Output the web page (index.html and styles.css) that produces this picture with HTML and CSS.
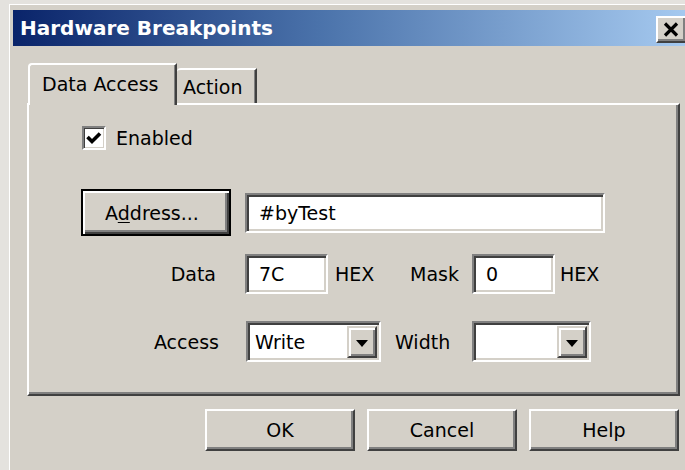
FILE: index.html
```html
<!DOCTYPE html>
<html lang="en">
<head>
<meta charset="utf-8">
<title>Hardware Breakpoints</title>
<link rel="stylesheet" href="styles.css">
</head>
<body>
<div class="window">
  <div class="titlebar">
    <span class="title">Hardware Breakpoints</span>
    <button class="close" type="button" aria-label="Close">
      <svg width="16" height="15" viewBox="0 0 16 15"><path d="M2 1.5 L14 13.5 M14 1.5 L2 13.5" stroke="#000" stroke-width="3.2" fill="none"/></svg>
    </button>
  </div>
  <div class="client">
    <div class="tabs">
      <div class="tab active">Data Access</div>
      <div class="tab">Action</div>
    </div>
    <div class="panel">
      <div class="check-row">
        <span class="checkbox">
          <svg width="20" height="20" viewBox="0 0 20 20"><path d="M3.5 9 L8 13.5 L16 5.5" stroke="#000" stroke-width="3.6" fill="none"/></svg>
        </span>
        <span>Enabled</span>
      </div>
      <div class="row addr-row">
        <button class="btn default" type="button">A<u>d</u>dress...</button>
        <div class="edit addr">#byTest</div>
      </div>
      <div class="row data-row">
        <span class="lbl lbl-data">Data</span>
        <div class="edit small">7C</div>
        <span class="unit">HEX</span>
        <span class="lbl lbl-mask">Mask</span>
        <div class="edit small mask">0</div>
        <span class="unit unit-last">HEX</span>
      </div>
      <div class="row access-row">
        <span class="lbl lbl-access">Access</span>
        <div class="combo access">
          <span class="combo-text">Write</span>
          <span class="drop"><svg width="12" height="7" viewBox="0 0 12 7"><path d="M0 0 H12 L6 7 Z" fill="#000"/></svg></span>
        </div>
        <span class="lbl lbl-width">Width</span>
        <div class="combo width">
          <span class="combo-text"></span>
          <span class="drop"><svg width="12" height="7" viewBox="0 0 12 7"><path d="M0 0 H12 L6 7 Z" fill="#000"/></svg></span>
        </div>
      </div>
    </div>
    <div class="actions">
      <button class="btn" type="button">OK</button>
      <button class="btn" type="button">Cancel</button>
      <button class="btn" type="button">Help</button>
    </div>
  </div>
</div>
</body>
</html>
```

FILE: styles.css
```css
html, body {
  margin: 0;
  padding: 0;
  overflow: hidden;
}

body {
  width: 685px;
  height: 470px;
  background: #e4e2de;
  font-family: "DejaVu Sans", "Liberation Sans", sans-serif;
  font-size: 19px;
  color: #000;
}

/* classic window frame */
.window {
  margin: 4px 0 0 9px;
  width: 700px;
  height: 480px;
  box-sizing: border-box;
  background: #d4d0c8;
  border-top: 1px solid #fff;
  border-left: 1px solid #fff;
  padding: 5px 0 0 3px;
}

.titlebar {
  width: 676px;
  height: 36px;
  display: flex;
  align-items: flex-start;
  background: linear-gradient(to right, #0a246a 0%, #4a72aa 45%, #a6caf0 100%);
  box-sizing: border-box;
  padding-left: 7px;
}

.title {
  color: #fff;
  font-weight: bold;
  font-size: 20px;
  line-height: 36px;
  white-space: nowrap;
}

.close {
  margin: 6px 2px 0 auto;
  width: 31px;
  height: 27px;
  padding: 0 2px 0 0;
  background: #d4d0c8;
  border: 2px solid;
  border-color: #fff #404040 #404040 #fff;
  box-shadow: inset -2px -2px 0 #808080;
  display: flex;
  align-items: center;
  justify-content: center;
}

.client {
  padding: 17px 0 0 14px;
}

/* tab strip */
.tabs {
  display: flex;
  align-items: flex-end;
  height: 40px;
}

.tab {
  box-sizing: border-box;
  background: #d4d0c8;
  border-top: 2px solid #fff;
  border-right: 2px solid #404040;
  border-top-left-radius: 4px;
  display: flex;
  align-items: center;
  white-space: nowrap;
}

.tab.active {
  position: relative;
  z-index: 1;
  margin-left: 1px;
  width: 149px;
  height: 42px;
  margin-bottom: -2px;
  border-left: 2px solid #fff;
  padding: 0 0 2px 12px;
  box-shadow: inset -1px 0 0 #808080;
}

.tab:not(.active) {
  width: 80px;
  height: 35px;
  padding-left: 6px;
  box-shadow: inset -1px 0 0 #808080;
}

/* tab page */
.panel {
  box-sizing: border-box;
  width: 653px;
  height: 293px;
  border: 2px solid;
  border-color: #fff #404040 #404040 #fff;
  box-shadow: inset -2px -2px 0 #808080;
}

.check-row {
  display: flex;
  align-items: center;
  gap: 10px;
  margin: 21px 0 0 53px;
  height: 24px;
}

.checkbox {
  box-sizing: border-box;
  width: 24px;
  height: 24px;
  background: #fff;
  border: 2px solid;
  border-color: #808080 #fff #fff #808080;
  box-shadow: inset 1px 1px 0 #404040, inset -1px -1px 0 #d4d0c8;
  display: flex;
  align-items: center;
  justify-content: center;
}

.row {
  display: flex;
  align-items: center;
}

.addr-row {
  margin: 39px 0 0 52px;
  height: 47px;
  gap: 14px;
}

.data-row {
  margin-top: 18px;
  height: 40px;
}

.access-row {
  margin-top: 27px;
  height: 41px;
}

.lbl {
  white-space: nowrap;
}

.lbl-data {
  width: 187px;
  text-align: right;
  margin-right: 29px;
}

.lbl-access {
  width: 190px;
  text-align: right;
  margin-right: 27px;
}

.lbl-mask {
  width: 48px;
  text-align: right;
  margin-right: 14px;
}

.lbl-width {
  width: 63px;
  margin: 0 14px;
}

.unit {
  width: 75px;
  margin-left: 7px;
}

.unit-last {
  margin-left: 5px;
}

/* buttons */
.btn {
  box-sizing: border-box;
  width: 150px;
  height: 42px;
  padding: 0;
  font: inherit;
  color: #000;
  background: #d4d0c8;
  border: 2px solid;
  border-color: #fff #404040 #404040 #fff;
  box-shadow: inset -2px -2px 0 #808080;
}

.btn.default {
  height: 47px;
  padding-right: 8px;
  border: 2px solid #000;
  box-shadow: inset 2px 2px 0 #fff, inset -2px -2px 0 #404040, inset -4px -4px 0 #808080;
}

.btn u {
  text-underline-offset: 2px;
}

/* text fields */
.edit {
  box-sizing: border-box;
  height: 40px;
  background: #fff;
  border: 2px solid;
  border-color: #808080 #fff #fff #808080;
  box-shadow: inset 2px 2px 0 #404040, inset -2px -2px 0 #d4d0c8;
  padding: 0 0 0 12px;
  display: flex;
  align-items: center;
  white-space: nowrap;
}

.edit.addr {
  width: 360px;
}

.edit.small {
  width: 83px;
}

/* drop-down lists */
.combo {
  box-sizing: border-box;
  height: 41px;
  background: #fff;
  border: 2px solid;
  border-color: #808080 #fff #fff #808080;
  box-shadow: inset 2px 2px 0 #404040, inset -2px -2px 0 #d4d0c8;
  padding: 3px 2px 2px 5px;
  display: flex;
  align-items: stretch;
}

.combo.access {
  width: 135px;
}

.combo.width {
  width: 119px;
}

.combo-text {
  flex: 1;
  display: flex;
  align-items: center;
  padding-left: 2px;
}

.drop {
  box-sizing: border-box;
  width: 30px;
  background: #d4d0c8;
  border: 2px solid;
  border-color: #d4d0c8 #404040 #404040 #d4d0c8;
  box-shadow: inset 2px 2px 0 #fff, inset -2px -2px 0 #808080;
  display: flex;
  align-items: center;
  justify-content: center;
  padding-top: 2px;
}

.actions {
  margin-top: 13px;
  width: 653px;
  display: flex;
  justify-content: flex-end;
  gap: 12px;
  padding-right: 1px;
  box-sizing: border-box;
}
```
